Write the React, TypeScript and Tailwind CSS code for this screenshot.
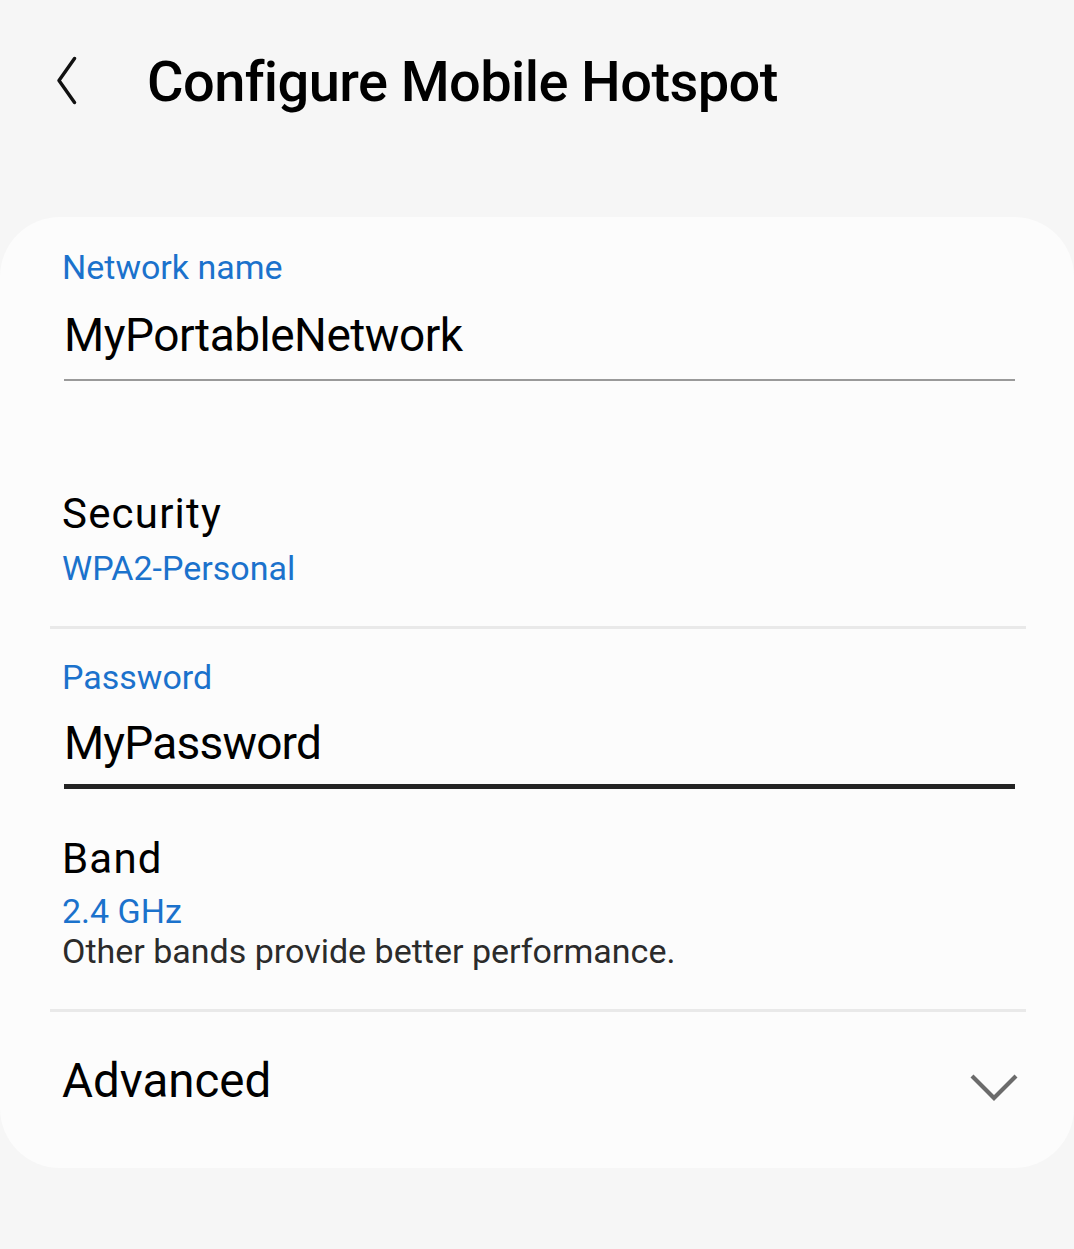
import React from "react";

function BackChevron() {
  return (
    <svg width="20" height="50" viewBox="0 0 20 50" fill="none">
      <path d="M17.5 2.5 L2 24.5 L17.5 46.5" stroke="#111" strokeWidth="3.4" strokeLinecap="round" strokeLinejoin="round" />
    </svg>
  );
}

function DownChevron() {
  return (
    <svg width="50" height="32" viewBox="0 0 50 32" fill="none">
      <path d="M3 4 L25 26 L47 4" stroke="#6b6b6b" strokeWidth="4.2" />
    </svg>
  );
}

export default function App() {
  return (
    <div
      className="min-h-[1249px] w-full bg-[#f6f6f6] text-[#111]"
      style={{ fontFamily: "Roboto, 'Noto Sans', sans-serif" }}
    >
      {/* Header */}
      <header className="flex h-[217px] items-start pt-[54px]">
        <div className="ml-[57px] mt-[2px] flex h-[50px] w-[20px] items-center">
          <BackChevron />
        </div>
        <h1 className="ml-[70px] text-[56px] font-medium leading-[56px] tracking-[-0.6px] text-black">
          Configure Mobile Hotspot
        </h1>
      </header>

      {/* Settings card */}
      <section className="rounded-[60px] bg-[#fcfcfc] pt-[30px] pb-[59px]">
        {/* Network name */}
        <div className="px-[62px]">
          <div className="text-[34px] leading-[40px] text-[#1b72cc]">Network name</div>
          <div className="mt-[20px] pl-[2px] text-[46px] leading-[56px] tracking-[-0.5px] text-black">
            MyPortableNetwork
          </div>
          <div className="mt-[16px] ml-[2px] mr-[-3px] h-[2px] bg-[#9a9a9a]" />
        </div>

        {/* Security */}
        <div className="mt-[108px] px-[62px]">
          <div className="text-[42px] leading-[50px] tracking-[1.2px] text-black">Security</div>
          <div className="mt-[9px] text-[34px] leading-[40px] text-[#1b72cc]">WPA2-Personal</div>
        </div>
        <div className="mt-[38px] ml-[50px] mr-[48px] h-[3px] bg-[#e9e9e9]" />

        {/* Password */}
        <div className="mt-[28px] px-[62px]">
          <div className="text-[34px] leading-[40px] text-[#1b72cc]">Password</div>
          <div className="mt-[18px] pl-[2px] text-[46px] leading-[56px] tracking-[-0.8px] text-black">
            MyPassword
          </div>
          <div className="mt-[13px] ml-[2px] mr-[-3px] h-[5px] bg-[#232323]" />
        </div>

        {/* Band */}
        <div className="mt-[45px] px-[62px]">
          <div className="text-[42px] leading-[50px] tracking-[1.2px] text-black">Band</div>
          <div className="mt-[7px] text-[34px] leading-[40px] text-[#1b72cc]">2.4 GHz</div>
          <div className="mt-[1px] text-[34px] leading-[38px] text-[#2b2b2b]">
            Other bands provide better performance.
          </div>
        </div>
        <div className="mt-[39px] ml-[50px] mr-[48px] h-[3px] bg-[#e9e9e9]" />

        {/* Advanced */}
        <div className="mt-[41px] flex items-center justify-between pl-[62px] pr-[55px]">
          <div className="text-[47.5px] leading-[56px] text-black">Advanced</div>
          <div className="mt-[13px]">
            <DownChevron />
          </div>
        </div>
      </section>
    </div>
  );
}
